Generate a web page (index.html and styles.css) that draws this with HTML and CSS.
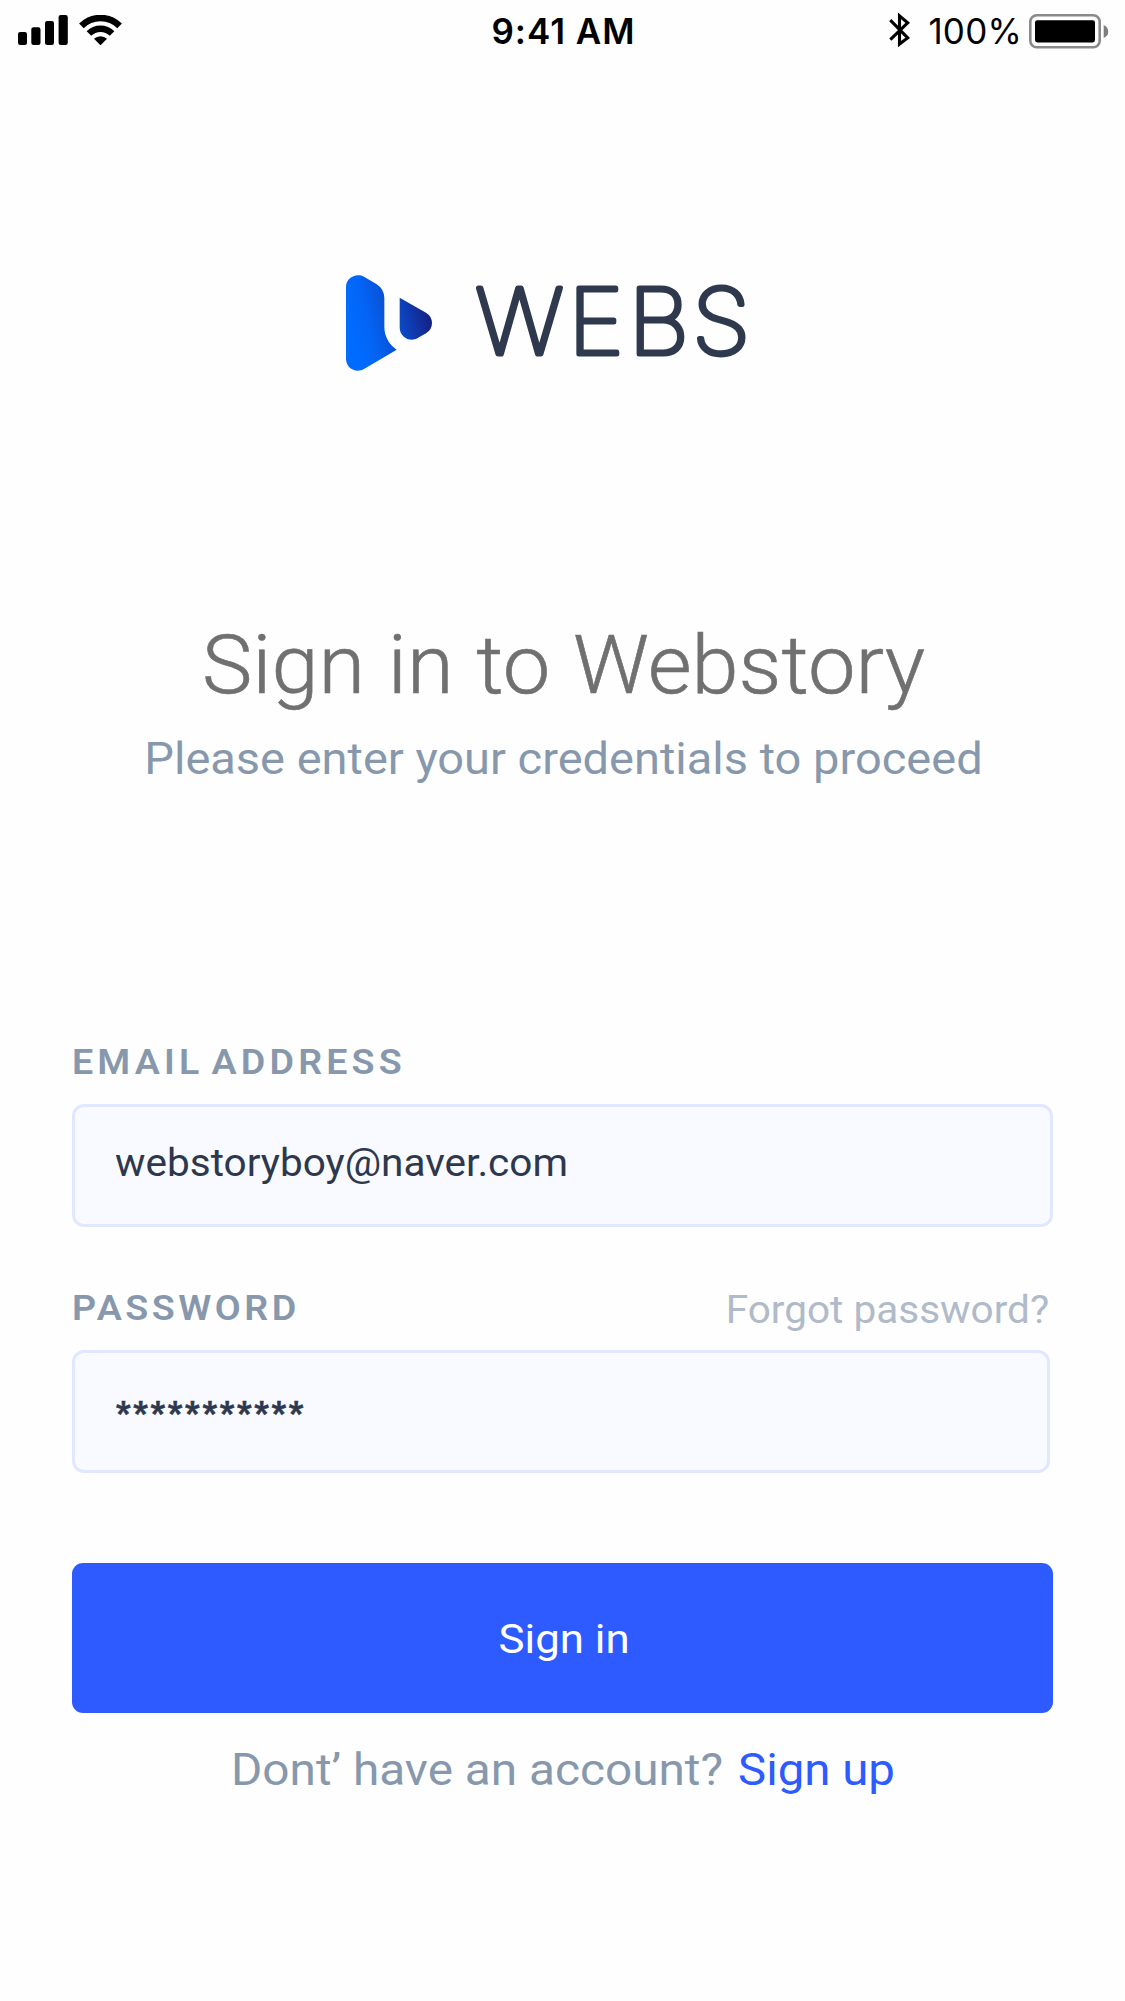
FILE: index.html
```html
<!DOCTYPE html>
<html lang="en">
<head>
  <meta charset="utf-8">
  <title>Sign in to Webstory</title>
  <link rel="stylesheet" href="styles.css">
</head>
<body>
  <header class="status">
    <div class="status-left">
      <svg class="signal" viewBox="0 0 50 30" aria-hidden="true">
        <rect x="0" y="17" width="9" height="13" rx="2.2"/>
        <rect x="13.3" y="12.2" width="9.2" height="17.8" rx="2.2"/>
        <rect x="27" y="6" width="9" height="24" rx="2.2"/>
        <rect x="40.6" y="0" width="9.2" height="30" rx="2.2"/>
      </svg>
      <svg class="wifi" viewBox="0 0 128 90" aria-hidden="true">
        <path d="M6.7 32.7A81 81 0 0 1 121.3 32.7M29.4 55.4A49 49 0 0 1 98.6 55.4" fill="none" stroke="#000" stroke-width="19.5"/>
        <path d="M64 91L44.5 71.5A27.5 27.5 0 0 1 83.5 71.5Z"/>
      </svg>
    </div>
    <time class="clock">9:41 AM</time>
    <div class="status-right">
      <svg class="bluetooth" viewBox="0 0 64 108" aria-hidden="true">
        <path d="M4 24L57 78L32 97V11L57 32L4 83" fill="none" stroke="#000" stroke-width="9.5"/>
      </svg>
      <span class="percent">100%</span>
      <svg class="battery" viewBox="0 0 80 36" aria-hidden="true">
        <rect x="1.3" y="1.3" width="69.4" height="32" rx="6.5" fill="none" stroke="#8a8a8a" stroke-width="2.6"/>
        <rect x="6" y="6.2" width="60" height="22.2" rx="2.4"/>
        <path d="M74.7 11Q79.2 13 79.2 17.5Q79.2 22 74.7 24Z" fill="#7d7d7d"/>
      </svg>
    </div>
  </header>

  <main class="page">
    <div class="brand">
      <svg class="mark" viewBox="0 0 258 288" aria-hidden="true">
        <defs>
          <linearGradient id="blue" gradientUnits="userSpaceOnUse" x1="20" y1="165" x2="252" y2="115">
            <stop offset="0" stop-color="#006bff"/>
            <stop offset=".2" stop-color="#0365f6"/>
            <stop offset=".6" stop-color="#0b49c7"/>
            <stop offset="1" stop-color="#152083"/>
          </linearGradient>
        </defs>
        <path fill="url(#blue)" d="M0 36C0 9 29-8 54 5L91 27Q115 42 115 70V156C115 183 129 209 152 224L54 282C29 296 0 279 0 251Z"/>
        <path fill="url(#blue)" d="M161 68L240 113Q258 124 258 144Q258 164 240 175L214 190C190 203 161 184 161 158Z"/>
      </svg>
      <svg class="wordmark" viewBox="0 0 290 100" role="img" aria-label="WEBS">
        <text transform="scale(1.04 1)" x="5.2 94.6 152.4 213.6" y="79">WEBS</text>
      </svg>
    </div>

    <h1 class="title"><span>Sign in to Webstory</span></h1>
    <p class="subtitle"><span>Please enter your credentials to proceed</span></p>

    <form class="form">
      <div class="label-row"><label class="label">EMAIL ADDRESS</label></div>
      <div class="field"><span class="value">webstoryboy@naver.com</span></div>
      <div class="label-row second">
        <label class="label password">PASSWORD</label>
        <a class="forgot">Forgot password?</a>
      </div>
      <div class="field narrow"><span class="secret">***********</span></div>
      <button class="submit" type="button"><span>Sign in</span></button>
    </form>

    <p class="signup"><span class="question">Dont’ have an account?</span><a class="link">Sign up</a></p>
  </main>
</body>
</html>
```
FILE: styles.css
```css
* { box-sizing: border-box; }

body {
  margin: 0;
  height: 2001px;
  overflow: hidden;
  background: #fefefe;
  font-family: Roboto, "Noto Sans", sans-serif;
}

svg { display: block; flex: none; }

/* Status bar */
.status {
  display: grid;
  grid-template-columns: 1fr auto 1fr;
  align-items: start;
  height: 64px;
  padding: 0 16px 0 18px;
  font-family: Inter, sans-serif;
  font-size: 35px;
  line-height: 40px;
  color: #000;
}
.status-left, .status-right { display: flex; }
.status-right { justify-content: flex-end; }
.signal { width: 50px; height: 30px; margin: 15px 11px 0 0; }
.wifi { width: 43px; height: 30px; margin-top: 15px; }
.clock { font-weight: 600; letter-spacing: 1px; padding-top: 11px; }
.bluetooth { width: 21px; height: 36px; margin: 12px 18px 0 0; }
.percent { padding-top: 11px; letter-spacing: .2px; margin-right: 7px; }
.battery { width: 80px; height: 36px; margin-top: 13.5px; }

/* Page */
.page { padding: 0 72px; }
.brand { display: flex; height: 100px; margin: 211px 0 0 274px; }
.mark { width: 86px; height: 96px; }
.wordmark { width: 290px; height: 100px; margin-left: 38px; overflow: visible; }
.wordmark text {
  font: 100 91px Inter, sans-serif;
  fill: #2e394d;
  stroke: #2e394d;
  stroke-width: 5px;
  stroke-linejoin: round;
}

/* Roboto is stretched slightly to get the wider letterforms */
.title {
  margin: 240px 0 0;
  padding-left: 2px;
  font-size: 82px;
  font-weight: 300;
  line-height: 100px;
  word-spacing: 2px;
  text-align: center;
  white-space: nowrap;
  color: #707070;
  -webkit-text-stroke: .6px #707070;
}
.title span, .subtitle span, .submit span { display: inline-block; }
.title span { transform: scaleX(1.034); }
.subtitle {
  margin: 14px 0 0;
  padding-left: 2px;
  font-size: 44px;
  line-height: 60px;
  text-align: center;
  white-space: nowrap;
  color: #8798ad;
}
.subtitle span { transform: scaleX(1.068); }

/* Form */
.form { margin-top: 253px; }
.label-row {
  display: flex;
  justify-content: space-between;
  height: 40px;
  margin-bottom: 22px;
}
.second { margin-top: 61px; padding-right: 4px; }
.label {
  font-size: 35.5px;
  font-weight: 600;
  line-height: 40px;
  letter-spacing: 3.9px;
  word-spacing: -5px;
  color: #8798ad;
  transform: scaleX(1.06);
  transform-origin: left;
}
.password { letter-spacing: 3.3px; }
.forgot {
  padding-top: 2px;
  font-size: 38.5px;
  line-height: 40px;
  color: #b0bac9;
  transform: scaleX(1.053);
  transform-origin: right;
}
.field {
  display: flex;
  align-items: center;
  height: 123px;
  padding: 0 40px;
  border: 3px solid #e0e7ff;
  border-radius: 12px;
  background: #f9faff;
  color: #2e384d;
}
.narrow { width: 978px; }
.value {
  padding-bottom: 6px;
  font-size: 38.5px;
  transform: scaleX(1.053);
  transform-origin: left;
}
.secret {
  padding: 2px 0 0 1px;
  font-size: 31px;
  font-weight: 900;
  letter-spacing: 2.85px;
  -webkit-text-stroke: .6px #2e384d;
}
.submit {
  display: block;
  width: 981px;
  height: 150px;
  margin-top: 90px;
  padding: 0 0 0 3px;
  border: 0;
  border-radius: 11px;
  background: #2e5bff;
  font: 400 41.5px Roboto, sans-serif;
  color: #fff;
}
.submit span { transform: scaleX(1.055); }

.signup {
  display: flex;
  margin: 27px 0 0;
  padding-left: 159px;
  font-size: 44px;
  line-height: 60px;
  white-space: nowrap;
  color: #8798ad;
}
.question { flex: 0 0 507px; transform: scaleX(1.085); transform-origin: left; }
.link { color: #2e5bff; transform: scaleX(1.077); transform-origin: left; }
```
